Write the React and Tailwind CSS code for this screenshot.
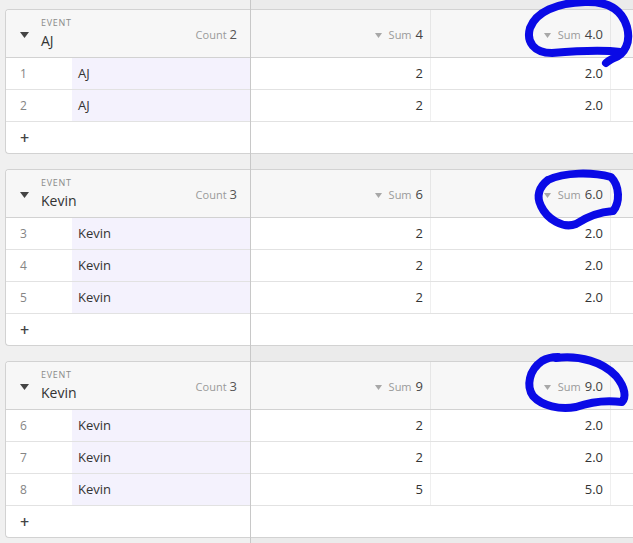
import React from "react";

const groups = [
  { name: "AJ", count: 2, sum: "4", sum2: "4.0", rows: [[1, "AJ", "2", "2.0"], [2, "AJ", "2", "2.0"]] },
  { name: "Kevin", count: 3, sum: "6", sum2: "6.0", rows: [[3, "Kevin", "2", "2.0"], [4, "Kevin", "2", "2.0"], [5, "Kevin", "2", "2.0"]] },
  { name: "Kevin", count: 3, sum: "9", sum2: "9.0", rows: [[6, "Kevin", "2", "2.0"], [7, "Kevin", "2", "2.0"], [8, "Kevin", "5", "5.0"]] },
];

function LeftGroup({ g }) {
  return (
    <div className="border-l border-y border-[#d2d2d2] rounded-l-[4px] bg-white overflow-hidden">
      <div className="h-[48px] bg-[#f7f7f7] border-b border-[#d2d2d2] flex items-center pr-[13px]">
        <svg width="9" height="6" viewBox="0 0 9 6" className="ml-[14px] mt-[3px] shrink-0">
          <path d="M0 0 L9 0 L4.5 6 Z" fill="#444" />
        </svg>
        <div className="ml-[12px] flex flex-col">
          <span className="text-[9px] leading-[11px] tracking-[0.08em] text-[#8a8a8a]">EVENT</span>
          <span className="text-[14px] leading-[19px] text-[#333] font-medium mt-[3px]">{g.name}</span>
        </div>
        <div className="ml-auto mt-[2px] flex items-baseline gap-[3px]">
          <span className="text-[11px] text-[#9a9a9a]">Count</span>
          <span className="text-[13px] text-[#555]">{g.count}</span>
        </div>
      </div>
      {g.rows.map((r) => (
        <div key={r[0]} className="h-[32px] border-b border-[#e2e2e2] flex">
          <div className="w-[66px] pl-[14px] flex items-center text-[12px] text-[#858585]">{r[0]}</div>
          <div className="flex-1 bg-[#f4f2fd] pl-[6px] flex items-center text-[13px] text-[#333]">{r[1]}</div>
        </div>
      ))}
      <div className="h-[31px] flex items-center pl-[14px] text-[16px] font-semibold text-[#444]">+</div>
    </div>
  );
}

function SumHead({ v }) {
  return (
    <div className="w-[180px] shrink-0 border-r border-[#e6e6e6] flex items-center justify-end pr-[7px] pt-[3px]">
      <svg width="7" height="5" viewBox="0 0 7 5" className="mr-[7px]">
        <path d="M0 0 L7 0 L3.5 5 Z" fill="#a8a8a8" />
      </svg>
      <span className="text-[11px] text-[#9a9a9a] mr-[4px]">Sum</span>
      <span className="text-[13px] text-[#444]">{v}</span>
    </div>
  );
}

function RightGroup({ g }) {
  return (
    <div className="border-y border-[#d2d2d2] bg-white overflow-hidden">
      <div className="h-[48px] bg-[#f7f7f7] border-b border-[#d2d2d2] flex">
        <SumHead v={g.sum} />
        <SumHead v={g.sum2} />
        <div className="flex-1" />
      </div>
      {g.rows.map((r) => (
        <div key={r[0]} className="h-[32px] border-b border-[#e2e2e2] flex text-[13px] text-[#333]">
          <div className="w-[180px] shrink-0 border-r border-[#efefef] flex items-center justify-end pr-[7px]">{r[2]}</div>
          <div className="w-[180px] shrink-0 border-r border-[#efefef] flex items-center justify-end pr-[7px]">{r[3]}</div>
          <div className="flex-1" />
        </div>
      ))}
      <div className="h-[31px]" />
    </div>
  );
}

export default function App() {
  return (
    <div className="relative w-[633px] h-[543px] overflow-hidden flex bg-[#f0f0f0] font-['Open_Sans','Noto_Sans',sans-serif]">
      <div className="w-[251px] shrink-0 border-r border-[#c8c8c8] pl-[5px] pt-[9px] flex flex-col gap-[15px]">
        {groups.map((g, i) => (
          <LeftGroup key={i} g={g} />
        ))}
      </div>
      <div className="flex-1 min-w-0 bg-[#ebebeb] pt-[9px] flex flex-col gap-[15px]">
        {groups.map((g, i) => (
          <RightGroup key={i} g={g} />
        ))}
      </div>
      <svg className="absolute inset-0 pointer-events-none" width="633" height="543" viewBox="0 0 633 543" fill="none">
        <g stroke="#0a0ae6" strokeWidth="8" strokeLinecap="round" strokeLinejoin="round">
          <path d="M620 52 C600 49 575 51 552 53 C534 53 526 42 530 28 C536 12 556 3 585 2 C608 1 622 10 627 27 C631 42 625 54 614 58 C610 60 607 62 606 63" />
          <path d="M548 180 C565 172 592 172 611 177 C620 186 620 203 613 211 C600 212 588 216 576 224 C563 229 547 219 541 206 C536 196 539 187 548 180" />
          <path d="M556 358 C580 355 603 362 616 376 C626 388 626 398 622 402 C606 400 590 402 576 407 C560 410 542 406 533 396 C526 386 529 370 542 361 C547 358 552 357 558 357" />
        </g>
      </svg>
    </div>
  );
}
